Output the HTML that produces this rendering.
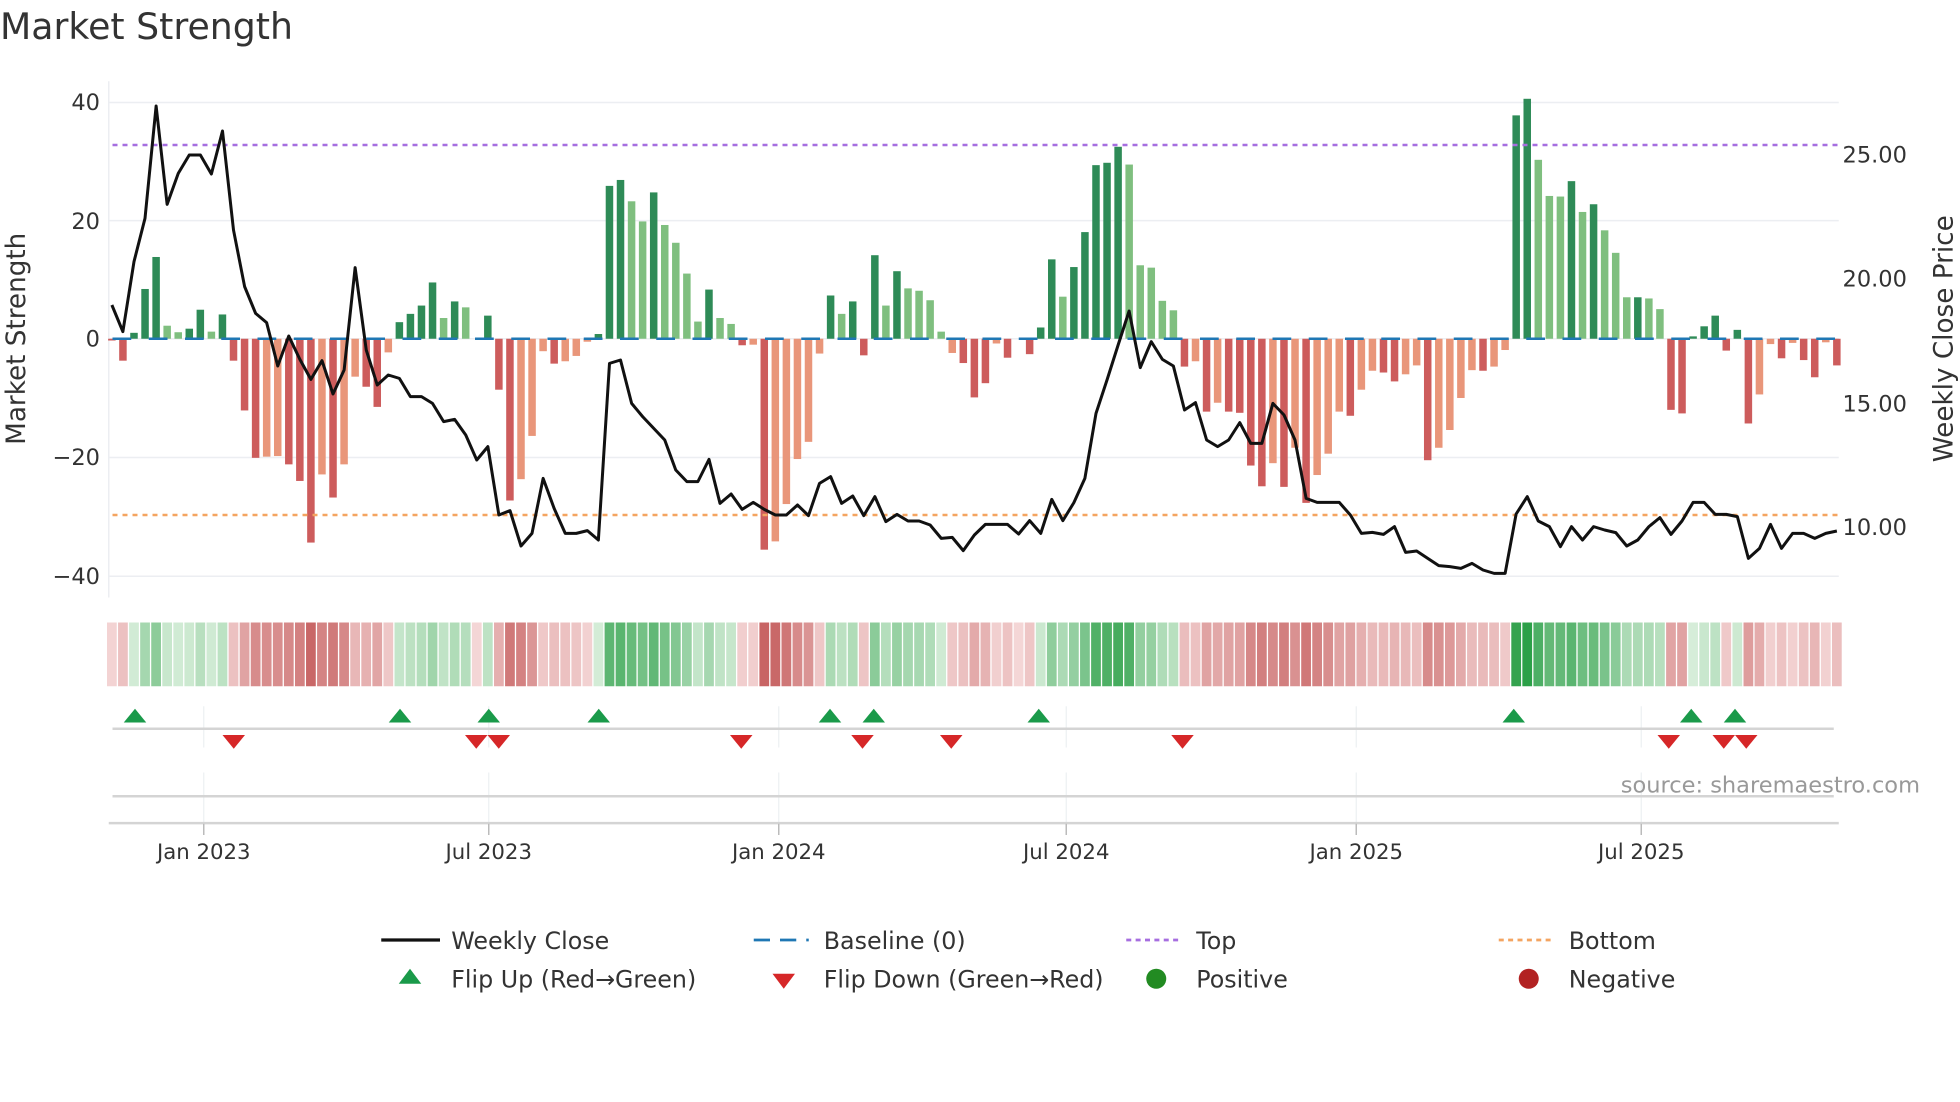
<!DOCTYPE html>
<html><head><meta charset="utf-8"><style>
html,body{margin:0;padding:0;background:#fff;width:1960px;height:1102px;overflow:hidden}
svg{display:block}
text{font-family:"DejaVu Sans","Liberation Sans",sans-serif;fill:#333}
</style></head><body>
<svg id="s" width="1960" height="1102" viewBox="0 0 1568 881.6" xmlns="http://www.w3.org/2000/svg">
<text x="0" y="31" font-size="29">Market Strength</text>
<g stroke="#eceef2" stroke-width="1.2">
<line x1="87" x2="1471" y1="82" y2="82"/><line x1="87" x2="1471" y1="176.5" y2="176.5"/><line x1="87" x2="1471" y1="271" y2="271"/><line x1="87" x2="1471" y1="366" y2="366"/><line x1="87" x2="1471" y1="461" y2="461"/>
<line x1="87" x2="87" y1="65" y2="478"/>
</g>
<g font-size="18" text-anchor="end">
<text x="80" y="88">40</text><text x="80" y="183">20</text><text x="80" y="277">0</text><text x="80" y="372">−20</text><text x="80" y="467">−40</text>
</g>
<g font-size="18">
<text x="1474" y="130">25.00</text><text x="1474" y="229">20.00</text><text x="1474" y="329">15.00</text><text x="1474" y="428">10.00</text>
</g>
<text font-size="21" text-anchor="middle" transform="translate(20,271) rotate(-90)">Market Strength</text>
<text font-size="21" text-anchor="middle" transform="translate(1562,271) rotate(-90)">Weekly Close Price</text>
<g id="bars"></g>
<line x1="90" x2="1470" y1="271" y2="271" stroke="#1f77b4" stroke-width="2" stroke-dasharray="15,14"/>
<line x1="90" x2="1470" y1="116" y2="116" stroke="#a66ee0" stroke-width="2" stroke-dasharray="4,4"/>
<line x1="90" x2="1470" y1="412" y2="412" stroke="#f4a460" stroke-width="2" stroke-dasharray="4,4"/>
<polyline id="price" fill="none" stroke="#111" stroke-width="2.4" stroke-linejoin="round"/>
<g id="heat"></g>
<g stroke="#edf0f3" stroke-width="1">
<line x1="163" x2="163" y1="565" y2="598"/><line x1="391" x2="391" y1="565" y2="598"/><line x1="623" x2="623" y1="565" y2="598"/><line x1="853" x2="853" y1="565" y2="598"/><line x1="1085" x2="1085" y1="565" y2="598"/><line x1="1313" x2="1313" y1="565" y2="598"/>
<line x1="163" x2="163" y1="618" y2="658"/><line x1="391" x2="391" y1="618" y2="658"/><line x1="623" x2="623" y1="618" y2="658"/><line x1="853" x2="853" y1="618" y2="658"/><line x1="1085" x2="1085" y1="618" y2="658"/><line x1="1313" x2="1313" y1="618" y2="658"/>
</g>
<line x1="90" x2="1467" y1="583" y2="583" stroke="#d4d4d4" stroke-width="2"/>
<line x1="90" x2="1467" y1="637" y2="637" stroke="#d4d4d4" stroke-width="2"/>
<line x1="87" x2="1471" y1="658.5" y2="658.5" stroke="#d4d4d4" stroke-width="2"/>
<g stroke="#bbb" stroke-width="1.2">
<line x1="163" x2="163" y1="659" y2="668"/><line x1="391" x2="391" y1="659" y2="668"/><line x1="623" x2="623" y1="659" y2="668"/><line x1="853" x2="853" y1="659" y2="668"/><line x1="1085" x2="1085" y1="659" y2="668"/><line x1="1313" x2="1313" y1="659" y2="668"/>
</g>
<g id="flips"></g>
<text x="1536" y="634" font-size="18" text-anchor="end" style="fill:#999">source: sharemaestro.com</text>
<g font-size="17" text-anchor="middle">
<text x="163" y="687">Jan 2023</text><text x="391" y="687">Jul 2023</text><text x="623" y="687">Jan 2024</text><text x="853" y="687">Jul 2024</text><text x="1085" y="687">Jan 2025</text><text x="1313" y="687">Jul 2025</text>
</g>
<g font-size="19">
<line x1="305" x2="352" y1="752" y2="752" stroke="#111" stroke-width="2.6"/><text x="361" y="759">Weekly Close</text>
<line x1="603" x2="647" y1="752" y2="752" stroke="#1f77b4" stroke-width="2.2" stroke-dasharray="13,8"/><text x="659" y="759">Baseline (0)</text>
<line x1="901" x2="945" y1="752" y2="752" stroke="#a66ee0" stroke-width="2.2" stroke-dasharray="4,3.5"/><text x="957" y="759">Top</text>
<line x1="1199" x2="1243" y1="752" y2="752" stroke="#f4a460" stroke-width="2.2" stroke-dasharray="4,3.5"/><text x="1255" y="759">Bottom</text>
<polygon points="319,787 337,787 328,775" fill="#1a9a4a"/><text x="361" y="790">Flip Up (Red→Green)</text>
<polygon points="618,779 636,779 627,791" fill="#d62728"/><text x="659" y="790">Flip Down (Green→Red)</text>
<circle cx="925" cy="783" r="8" fill="#228b22"/><text x="957" y="790">Positive</text>
<circle cx="1223" cy="783" r="8" fill="#b22222"/><text x="1255" y="790">Negative</text>
</g>
</svg>
<script>
var V=[-0.3,-3.7,1,8.4,13.8,2.2,1.1,1.7,4.9,1.2,4.1,-3.7,-12.1,-20.1,-19.9,-19.8,-21.2,-24,-34.4,-22.9,-26.8,-21.2,-6.4,-8.1,-11.5,-2.3,2.8,4.2,5.6,9.5,3.5,6.3,5.3,0,3.9,-8.6,-27.3,-23.7,-16.4,-2.1,-4.2,-3.8,-2.9,-0.5,0.8,25.8,26.8,23.2,19.8,24.7,19.2,16.2,11,2.9,8.3,3.5,2.5,-1.1,-1,-35.6,-34.2,-27.9,-20.3,-17.4,-2.5,7.3,4.2,6.3,-2.8,14.1,5.6,11.4,8.5,8.1,6.5,1.2,-2.4,-4.1,-9.9,-7.5,-0.8,-3.2,0,-2.6,1.9,13.4,7.1,12.1,18,29.3,29.7,32.4,29.4,12.4,12,6.4,4.8,-4.7,-3.8,-12.3,-10.8,-12.3,-12.5,-21.4,-24.9,-21,-25,-18.4,-27.7,-23,-19.4,-12.3,-13,-8.6,-5.4,-5.7,-7.2,-6,-4.5,-20.5,-18.4,-15.4,-10,-5.3,-5.4,-4.7,-1.9,37.7,40.5,30.2,24.1,24,26.6,21.4,22.7,18.3,14.5,7,7,6.8,5,-12,-12.6,0.4,2.1,3.9,-2,1.5,-14.3,-9.4,-0.9,-3.3,-0.7,-3.6,-6.5,-0.6,-4.5];
var T=("rrggglleel"+"grrrssrrrs"+"rssrrsgggg"+"lglzgrrsss"+"rsssggglle"+"llllgllrsr"+"sssssglgrg"+"lglllllrrrs".slice(0,10)+"srzrgglggg"+"ggllllllrsr".slice(0,0)+"ggllllrsr"+"srrrrsrsrs"+"ssrssrrssr"+"ssssrssggl"+"llglglllgl"+"llrrgggrgrs".slice(0,0)+"lrrgggrgrs"+"srsrrsr");
T="rrgggllggl"+"grrrssrrrs"+"rssrrsgggg"+"lglzgrrsss"+"rsssggglle".replace("e","g")+"llllgllrsr"+"sssssglgrg"+"lglllllrrrs".slice(0,10)+"srzrgglggg"+"gglllllrsr"+"srrrrsrsrs"+"ssrssrrssr"+"ssssrssggl"+"llglglllgl"+"lrrgggrgrs"+"srsrrsr";
var P=[244,265.3,209.3,174.7,84.8,163.5,138.7,124,124,139.2,104.8,184,229.3,250.7,258.1,292.8,268.8,287.5,303.5,288.5,315.2,296,214.1,280,308,300,302.7,317.3,317.3,322.7,337.3,335.5,348,368,357.3,412,408.5,436.8,426.7,382.7,406.7,426.7,426.7,424.5,432,290.7,288,322.7,333.3,342.7,352,376,385.3,385.3,367.5,402.7,395.2,407.5,401.9,407.5,412,412,404,412.5,386.7,381.3,402.7,396.8,412.5,397.3,417.3,411.5,416.8,416.8,420,430.7,429.9,440.5,428,419.5,419.5,419.5,427.2,416.5,426.7,399.5,416.5,402.1,382.7,330.7,304,276,248.8,294.1,273.3,287.5,292.8,328,322.1,352,357.3,352,338.1,354.7,354.7,322.7,332,352,398.7,401.9,401.9,401.9,412,426.7,425.9,427.5,421.3,441.9,440.8,446.7,452.5,453.3,454.7,450.7,456,458.7,458.7,411.2,397.3,416.8,421.3,437.3,421.3,432,421.3,424,426.1,436.8,432,421.3,414.1,427.5,416.8,401.9,401.9,411.5,411.5,413.3,446.7,438.7,419.5,438.7,426.7,426.7,430.7,426.7,424.8];
var NS="http://www.w3.org/2000/svg",x0=89.5,dx=8.846,u=4.74;
function el(n,a,p){var e=document.createElementNS(NS,n);for(var k in a)e.setAttribute(k,a[k]);p.appendChild(e);return e;}
var gb=document.getElementById("bars"),gh=document.getElementById("heat"),gf=document.getElementById("flips");
var C={g:"#2e8b57",l:"#7fbf7f",r:"#cd5c5c",s:"#e9967a",z:"#cd5c5c"};
function mix(a,b,t){return "rgb("+[0,1,2].map(function(i){return Math.round(a[i]+(b[i]-a[i])*t)}).join(",")+")";}
var pts=[];
for(var i=0;i<V.length;i++){
 var x=x0+i*dx,v=V[i],h=Math.abs(v)*u,t=T[i];
 if(v>0&&t!="g"&&t!="l")t="l";
 if(v<0&&t!="r"&&t!="s")t="s";
 if(h>0.3)el("rect",{x:x-3,y:v>=0?271-h:271,width:6,height:h,fill:C[t]},gb);
 var tt=Math.pow(Math.min(Math.abs(v)/40,1),0.75);
 var col=v>0?mix([220,240,222],[44,160,72],tt):mix([244,214,214],[196,90,90],tt);
 el("rect",{x:x-3.9,y:498,width:7.8,height:51,fill:col},gh);
 pts.push(x.toFixed(1)+","+(P[i]||420));
}
document.getElementById("price").setAttribute("points",pts.join(" "));
[108,320,391,479,664,699,831,1211,1353,1388].forEach(function(x){el("polygon",{points:(x-9)+",578 "+(x+9)+",578 "+x+",567",fill:"#1a9a4a"},gf);});
[187,381,399,593,690,761,946,1335,1379,1397].forEach(function(x){el("polygon",{points:(x-9)+",588 "+(x+9)+",588 "+x+",599",fill:"#d62728"},gf);});
</script>
</body></html>
